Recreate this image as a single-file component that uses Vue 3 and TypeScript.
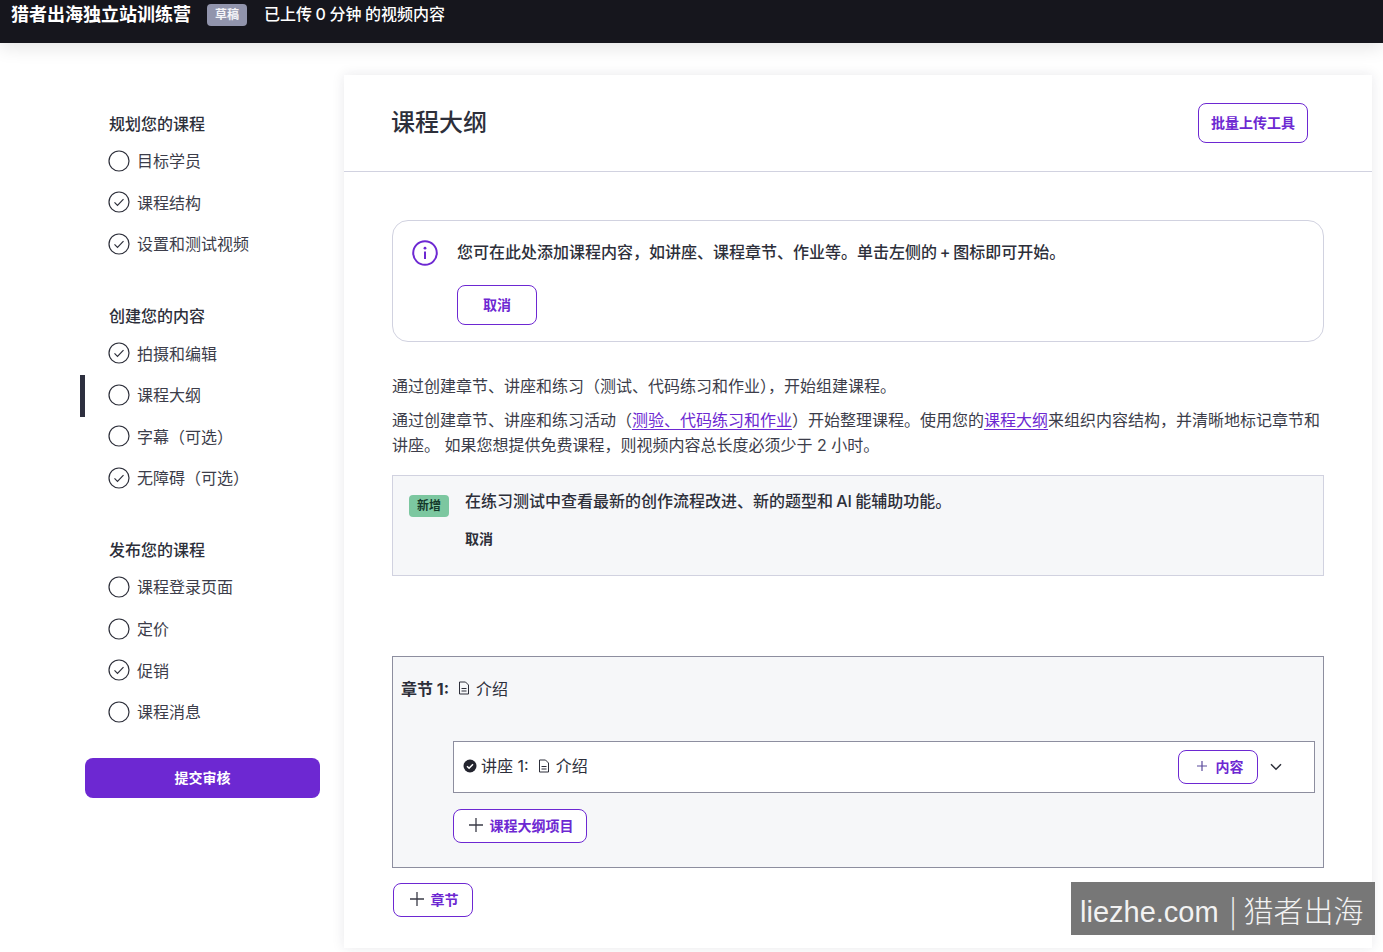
<script setup lang="ts">
interface Step { label: string; done: boolean; active?: boolean }
interface Group { title: string; steps: Step[] }

const groups: Group[] = [
  {
    title: '规划您的课程',
    steps: [
      { label: '目标学员', done: false },
      { label: '课程结构', done: true },
      { label: '设置和测试视频', done: true }
    ]
  },
  {
    title: '创建您的内容',
    steps: [
      { label: '拍摄和编辑', done: true },
      { label: '课程大纲', done: false, active: true },
      { label: '字幕（可选）', done: false },
      { label: '无障碍（可选）', done: true }
    ]
  },
  {
    title: '发布您的课程',
    steps: [
      { label: '课程登录页面', done: false },
      { label: '定价', done: false },
      { label: '促销', done: true },
      { label: '课程消息', done: false }
    ]
  }
]
</script>

<template>
  <div class="page">
    <header class="topbar">
      <span class="course-name">猎者出海独立站训练营</span>
      <span class="draft">草稿</span>
      <span class="uploaded">已上传 0 分钟 的视频内容</span>
    </header>

    <div class="layout">
      <aside class="sidebar">
        <section v-for="group in groups" :key="group.title" class="group">
          <h2 class="group-title">{{ group.title }}</h2>
          <div
            v-for="step in group.steps"
            :key="step.label"
            class="step"
            :class="{ active: step.active }"
          >
            <svg class="step-icon" viewBox="0 0 22 22" width="22" height="22" aria-hidden="true">
              <circle cx="11" cy="11" r="10" fill="none" stroke="#2d2f3a" stroke-width="1.2" />
              <path v-if="step.done" d="M6.5 11.3l3 3 6-6.2" fill="none" stroke="#2d2f3a" stroke-width="1.2" />
            </svg>
            <span class="step-label">{{ step.label }}</span>
          </div>
        </section>
        <button class="submit">提交审核</button>
      </aside>

      <main class="card">
        <div class="card-head">
          <h1>课程大纲</h1>
          <button class="btn bulk">批量上传工具</button>
        </div>

        <div class="card-body">
          <div class="notice">
            <svg class="info" viewBox="0 0 26 26" width="26" height="26" aria-hidden="true">
              <circle cx="13" cy="13" r="11.8" fill="none" stroke="#6d28d2" stroke-width="2" />
              <circle cx="13" cy="8.2" r="1.4" fill="#6d28d2" />
              <path d="M13 11.5v7.5" stroke="#6d28d2" stroke-width="2" />
            </svg>
            <div>
              <p class="notice-text">您可在此处添加课程内容，如讲座、课程章节、作业等。单击左侧的 + 图标即可开始。</p>
              <button class="btn cancel">取消</button>
            </div>
          </div>

          <p class="intro first">通过创建章节、讲座和练习（测试、代码练习和作业），开始组建课程。</p>
          <p class="intro">通过创建章节、讲座和练习活动（<a>测验、代码练习和作业</a>）开始整理课程。使用您的<a>课程大纲</a>来组织内容结构，并清晰地标记章节和讲座。 如果您想提供免费课程，则视频内容总长度必须少于 2 小时。</p>

          <div class="news">
            <span class="badge">新增</span>
            <div>
              <p class="news-text">在练习测试中查看最新的创作流程改进、新的题型和 AI 能辅助功能。</p>
              <p class="news-cancel">取消</p>
            </div>
          </div>

          <div class="chapter">
            <div class="chapter-title">
              <strong>章节 1:</strong>
              <svg class="doc" viewBox="0 0 12 14" width="12" height="14" aria-hidden="true">
                <path d="M1.5 1h6l3 3v9h-9zM3.5 7.5h5M3.5 10h5" fill="none" stroke="#2d2f3a" stroke-width="1" />
              </svg>
              <span>介绍</span>
            </div>

            <div class="lecture">
              <svg viewBox="0 0 14 14" width="14" height="14" aria-hidden="true">
                <circle cx="7" cy="7" r="6.5" fill="#23242e" />
                <path d="M4 7.2l2.1 2.1L10 5.2" fill="none" stroke="#fff" stroke-width="1.5" />
              </svg>
              <span class="lecture-no">讲座 1:</span>
              <svg class="doc" viewBox="0 0 12 14" width="12" height="14" aria-hidden="true">
                <path d="M1.5 1h6l3 3v9h-9zM3.5 7.5h5M3.5 10h5" fill="none" stroke="#2d2f3a" stroke-width="1" />
              </svg>
              <span class="lecture-name">介绍</span>
              <button class="btn add-content">
                <svg viewBox="0 0 10 10" width="10" height="10" aria-hidden="true"><path d="M5 0v10M0 5h10" stroke="#5b4a9c" stroke-width="1.2" /></svg>
                内容
              </button>
              <svg class="chevron" viewBox="0 0 12 8" width="12" height="8" aria-hidden="true">
                <path d="M1 1.2l5 5 5-5" fill="none" stroke="#2d2f3a" stroke-width="1.5" />
              </svg>
            </div>

            <button class="btn add-item">
              <svg viewBox="0 0 14 14" width="14" height="14" aria-hidden="true"><path d="M7 0v14M0 7h14" stroke="#3a3b47" stroke-width="1.3" /></svg>
              课程大纲项目
            </button>
          </div>

          <button class="btn add-chapter">
            <svg viewBox="0 0 14 14" width="14" height="14" aria-hidden="true"><path d="M7 0v14M0 7h14" stroke="#3a3b47" stroke-width="1.3" /></svg>
            章节
          </button>
        </div>
      </main>
    </div>

    <div class="watermark"><span class="wm-latin">liezhe.com</span> | 猎者出海</div>
  </div>
</template>

<style>
html, body {
  margin: 0;
  background: #fff;
  overflow: hidden;
}
</style>

<style scoped>
.page {
  position: relative;
  width: 1383px;
  height: 952px;
  overflow: hidden;
  font-family: Inter, "Noto Sans CJK SC", sans-serif;
  font-size: 16px;
  color: #2d2f3a;
  background: #fff;
}

.topbar {
  position: relative;
  z-index: 1;
  height: 43px;
  box-sizing: border-box;
  padding: 0 0 14px 11px;
  display: flex;
  align-items: center;
  background: #16161d;
  color: #fff;
  box-shadow: 0 5px 18px rgba(0, 0, 0, 0.1);
}

.course-name {
  font-size: 18px;
  font-weight: 700;
  line-height: 29px;
}

.draft {
  margin: 1px 0 0 16px;
  width: 40px;
  height: 22px;
  border-radius: 4px;
  background: #9194ac;
  font-size: 12px;
  font-weight: 700;
  line-height: 22px;
  text-align: center;
  color: #f4f4f8;
}

.uploaded {
  margin: 0 0 3px 17px;
  font-size: 16px;
  font-weight: 500;
  word-spacing: -0.7px;
}

.layout {
  display: flex;
  align-items: flex-start;
  padding: 32px 11px 0 0;
}

.sidebar {
  width: 344px;
  flex: none;
  box-sizing: border-box;
  padding: 37px 24px 0 0;
}

.group {
  margin-bottom: 39.5px;
}

.group-title {
  margin: 0 0 4px 109px;
  font-size: 16px;
  font-weight: 500;
  line-height: 24px;
}

.step {
  position: relative;
  height: 41.6px;
  margin-left: 85px;
  padding-left: 23px;
  box-sizing: border-box;
  display: flex;
  align-items: center;
  gap: 7px;
  color: #3c3d4a;
}

.step-icon {
  flex: none;
}

.step-label {
  padding-bottom: 1px;
}

.step.active::before {
  content: "";
  position: absolute;
  left: -5px;
  top: 1px;
  width: 5px;
  height: 42px;
  background: #2d2f3f;
}

.submit {
  display: block;
  width: 235px;
  height: 40px;
  margin: -14.5px 0 0 85px;
  padding: 0 0 2px;
  border: 0;
  border-radius: 8px;
  background: #6d28d2;
  color: #fff;
  font: 700 14px Inter, "Noto Sans CJK SC", sans-serif;
}

.card {
  flex: 1;
  height: 873px;
  background: #fff;
  box-shadow: 0 0 12px rgba(30, 30, 60, 0.1);
}

.card-head {
  height: 97px;
  box-sizing: border-box;
  padding: 0 64px 0 48px;
  display: flex;
  align-items: center;
  justify-content: space-between;
  border-bottom: 1px solid #d1d2e0;
}

.card-head h1 {
  margin: 0 0 0 -1px;
  font-size: 24px;
  font-weight: 500;
  line-height: 36px;
}

.btn {
  box-sizing: border-box;
  display: flex;
  align-items: center;
  justify-content: center;
  background: #fff;
  border: 1px solid #6d28d2;
  border-radius: 8px;
  color: #6d28d2;
  font: 700 14px Inter, "Noto Sans CJK SC", sans-serif;
  padding: 0 0 2px;
}

.bulk {
  width: 110px;
  height: 40px;
}

.card-body {
  padding: 48px 48px 0;
}

.notice {
  height: 122px;
  box-sizing: border-box;
  padding: 18px 19px;
  display: flex;
  gap: 19px;
  border: 1px solid #d1d2e0;
  border-radius: 16px;
}

.info {
  flex: none;
  margin-top: 1px;
}

.notice-text {
  margin: 1px 0 0;
  font-size: 16px;
  font-weight: 500;
  line-height: 24px;
  word-spacing: -1.5px;
}

.cancel {
  width: 80px;
  height: 40px;
  margin-top: 21px;
}

.intro {
  margin: 9px 0 0;
  line-height: 25px;
  color: #3c3d4a;
}

.intro.first {
  margin-top: 32px;
}

.intro a {
  color: #6d28d2;
  text-decoration: underline;
  text-decoration-thickness: 1px;
  text-underline-offset: 3px;
}

.news {
  height: 101px;
  box-sizing: border-box;
  margin-top: 17px;
  padding: 19px 16px;
  display: flex;
  align-items: flex-start;
  gap: 16px;
  background: #f6f7f9;
  border: 1px solid #d1d2e0;
}

.badge {
  flex: none;
  width: 40px;
  height: 22px;
  border-radius: 4px;
  background: #7cc7a0;
  color: #14382a;
  font-size: 12px;
  font-weight: 700;
  line-height: 22px;
  text-align: center;
}

.news-text {
  margin: -6px 0 0;
  font-weight: 500;
  line-height: 24px;
  word-spacing: -1px;
}

.news-cancel {
  margin: 15px 0 0;
  font-size: 14px;
  font-weight: 700;
  line-height: 22px;
}

.chapter {
  height: 212px;
  box-sizing: border-box;
  margin-top: 80px;
  padding: 19px 8px 0;
  background: #f6f7f9;
  border: 1px solid #8d8e9f;
}

.chapter-title {
  display: flex;
  align-items: center;
  height: 24px;
  gap: 9px;
}

.chapter-title strong {
  font-size: 16px;
}

.chapter-title span {
  margin-left: -3px;
}

.lecture {
  height: 52px;
  box-sizing: border-box;
  margin: 41px 0 0 52px;
  padding: 0 32px 2px 9px;
  display: flex;
  align-items: center;
  gap: 4px;
  background: #fff;
  border: 1px solid #8d8e9f;
}

.lecture-no {
  margin-right: 5px;
  padding-bottom: 2px;
}

.lecture-name {
  margin-left: 2px;
  padding-bottom: 2px;
}

.add-content {
  width: 80px;
  height: 34px;
  margin: 2px 8px 0 auto;
  padding-left: 4px;
  gap: 9px;
}

.chevron {
  flex: none;
  margin-top: 1px;
}

.add-item {
  width: 134px;
  height: 34px;
  margin: 16px 0 0 52px;
  padding-left: 2px;
  gap: 7px;
}

.add-chapter {
  width: 80px;
  height: 34px;
  margin: 15px 0 0 1px;
  padding-left: 2px;
  gap: 7px;
}

.watermark {
  position: absolute;
  left: 1071px;
  top: 882px;
  width: 304px;
  height: 53px;
  box-sizing: border-box;
  padding-left: 9px;
  background: #777;
  color: #f2f2f2;
  font-family: "Noto Sans CJK SC", sans-serif;
  font-size: 30px;
  font-weight: 300;
  line-height: 55px;
  white-space: nowrap;
}

.wm-latin {
  margin-right: 4px;
  font-family: "Liberation Sans", sans-serif;
  font-size: 29px;
}
</style>
